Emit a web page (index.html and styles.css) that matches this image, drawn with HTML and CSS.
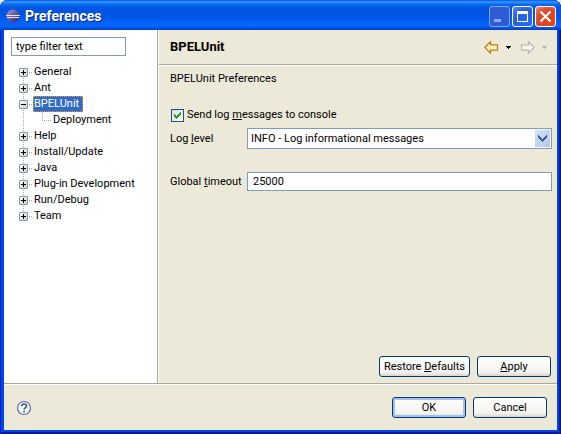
FILE: index.html
```
<!DOCTYPE html>
<html lang="en">
<head>
<meta charset="utf-8">
<title>Preferences</title>
<link rel="stylesheet" href="styles.css">
</head>
<body>
<div class="window">
  <header class="titlebar">
    <svg class="app-icon" viewBox="0 0 16 16" aria-hidden="true">
      <defs><linearGradient id="orb" x1="0" y1="0" x2="1" y2="1"><stop offset="0" stop-color="#b79cc4"/><stop offset=".4" stop-color="#6f68ae"/><stop offset="1" stop-color="#2c2165"/></linearGradient></defs>
      <circle cx="8" cy="8" r="6.500" fill="url(#orb)"/>
      <path d="M1 7.500h14M2 9.500h12" stroke="#e4e4f8"/>
    </svg>
    <h1 class="window-title">Preferences</h1>
    <div class="window-buttons">
      <button class="win-button win-button--dim" type="button" aria-label="Minimize"><svg viewBox="0 0 19 19"><path d="M4 12h7v3H4z" fill="#8fa9f0"/></svg></button>
      <button class="win-button" type="button" aria-label="Maximize"><svg viewBox="0 0 19 19"><path d="M4 4h11v11H4z M5 7v7h9V7z" fill="#fff" fill-rule="evenodd"/></svg></button>
      <button class="win-button win-button--close" type="button" aria-label="Close"><svg viewBox="0 0 19 19"><path d="M4.500 4.500l10 10M14.500 4.500l-10 10" stroke="#fff" stroke-width="2.200"/></svg></button>
    </div>
  </header>

  <div class="client">
    <div class="panes">
      <nav class="sidebar" aria-label="Preference pages">
        <input class="filter" type="text" value="type filter text" aria-label="Filter">
        <ul class="tree">
          <li><div class="row row--first"><button class="toggle" type="button" aria-label="Expand General"></button><span class="node">General</span></div></li>
          <li><div class="row"><button class="toggle" type="button" aria-label="Expand Ant"></button><span class="node">Ant</span></div></li>
          <li><div class="row"><button class="toggle toggle--open" type="button" aria-label="Collapse BPELUnit"></button><span class="node node--selected">BPELUnit</span></div>
            <ul class="subtree"><li><div class="row row--child"><span class="node">Deployment</span></div></li></ul></li>
          <li><div class="row"><button class="toggle" type="button" aria-label="Expand Help"></button><span class="node">Help</span></div></li>
          <li><div class="row"><button class="toggle" type="button" aria-label="Expand Install/Update"></button><span class="node">Install/Update</span></div></li>
          <li><div class="row"><button class="toggle" type="button" aria-label="Expand Java"></button><span class="node">Java</span></div></li>
          <li><div class="row"><button class="toggle" type="button" aria-label="Expand Plug-in Development"></button><span class="node">Plug-in Development</span></div></li>
          <li><div class="row"><button class="toggle" type="button" aria-label="Expand Run/Debug"></button><span class="node">Run/Debug</span></div></li>
          <li><div class="row row--last"><button class="toggle" type="button" aria-label="Expand Team"></button><span class="node">Team</span></div></li>
        </ul>
      </nav>

      <main class="page">
        <div class="page-header">
          <h2 class="page-title">BPELUnit</h2>
          <div class="history">
            <button class="nav-button" type="button" aria-label="Back"><svg class="arrow" viewBox="0 0 15 13"><path d="M.8 6.500L6.500.8v3h7v5.400h-7v3z" fill="#fff0b8" stroke="#b97f14" stroke-width="1.200"/></svg></button>
            <button class="nav-button" type="button" aria-label="Back history"><svg class="caret" viewBox="0 0 5 3"><path d="M0 0h5v1H4v1H3v1H2V2H1V1H0z"/></svg></button>
            <button class="nav-button nav-button--next" type="button" aria-label="Forward" disabled><svg class="arrow" viewBox="0 0 15 13"><path d="M14.200 6.500L8.500.8v3h-7v5.400h7v3z" fill="#f6f5f0" stroke="#b9b8b2" stroke-width="1.200"/></svg></button>
            <button class="nav-button" type="button" aria-label="Forward history" disabled><svg class="caret" viewBox="0 0 5 3"><path d="M0 0h5v1H4v1H3v1H2V2H1V1H0z" fill="#bdbbaf"/></svg></button>
          </div>
        </div>
        <form class="page-body">
          <p class="description">BPELUnit Preferences</p>
          <label class="check-row"><input class="checkbox" type="checkbox" checked><span>Send log <u>m</u>essages to console</span></label>
          <div class="fields">
            <label for="level">Log <u>l</u>evel</label>
            <select class="field field--select" id="level"><option>INFO - Log informational messages</option></select>
            <label for="timeout">Global <u>t</u>imeout</label>
            <input class="field" id="timeout" type="text" value="25000">
          </div>
          <div class="page-actions">
            <button class="button button--wide" type="button">Restore <u>D</u>efaults</button>
            <button class="button" type="button"><u>A</u>pply</button>
          </div>
        </form>
      </main>
    </div>

    <footer class="footer">
      <button class="help" type="button" aria-label="Help"><svg viewBox="0 0 16 16"><circle cx="8" cy="8" r="6.500" fill="#f4f7fb" stroke="#5b7499" stroke-width="1.200"/><path d="M5.700 6.300c0-3 4.800-3 4.800-.2C10.500 8 8.100 7.600 8.100 9.600M8.100 10.800v1.700" fill="none" stroke="#3f5d89" stroke-width="1.700"/></svg></button>
      <div class="dialog-actions">
        <button class="button button--default" type="submit">OK</button>
        <button class="button" type="button">Cancel</button>
      </div>
    </footer>
  </div>
</div>
</body>
</html>
```
FILE: styles.css
```
* { box-sizing: border-box; }

body {
  margin: 0;
  background: #ece9d8;
  color: #000;
  font: 11px/16px Tahoma, Roboto, sans-serif;
}

button, input, select { font: inherit; color: inherit; }
button { padding: 0; border: 0; background: none; }
h1, h2, p, ul { margin: 0; padding: 0; }
ul { list-style: none; }
svg { display: block; }

.window {
  display: flex;
  flex-direction: column;
  min-height: 100vh;
  padding: 0 4px 4px;
  border-radius: 8px 8px 0 0;
  background: #0046e0;
  box-shadow: inset 1px 0 #0019cf, inset -1px 0 #00138c, inset -2px 0 #001ea0, inset 0 -1px #00138c, inset 0 -2px #001ea0;
}

.titlebar {
  display: flex;
  align-items: center;
  gap: 4px;
  height: 30px;
  margin: 0 -4px;
  padding: 2px 5px 0;
  border-radius: 8px 8px 0 0;
  background: linear-gradient(#0058e6 0, #3a93ff 2px, #0670f0 4px, #0054e3 8px, #0055e5 16px, #0064fb 23px, #0066ff 26px, #0048d8 29px, #0039c0 30px);
}

.app-icon { width: 16px; height: 16px; }

.window-title {
  flex: 1;
  color: #fff;
  font: bold 14px/20px "Trebuchet MS", Roboto, sans-serif;
  text-shadow: 1px 1px #0a1e8c;
}

.window-buttons { display: flex; gap: 2px; }

.win-button {
  width: 21px;
  height: 21px;
  border: 1px solid #fff;
  border-radius: 3px;
  background: radial-gradient(circle at 75% 80%, #2a6cf0, #2c5ddc 60%, #5e8af4);
}
.win-button--dim { border-color: #8aa5ef; background: #2e5bd8; }
.win-button--close { background: radial-gradient(circle at 70% 75%, #e1441c, #da4a28 60%, #ec8f78); }

.client { display: flex; flex: 1; flex-direction: column; background: #ece9d8; }
.panes { display: flex; flex: 1; border-bottom: 1px solid #aca899; }

.sidebar {
  flex: none;
  width: 154px;
  padding: 7px;
  border-right: 1px solid #aca899;
  background: #fff;
}

.filter {
  display: block;
  width: 115px;
  height: 19px;
  padding: 0 4px;
  border: 1px solid #7f9db9;
  background: #fff;
}

.tree { margin-top: 8px; }

.row {
  display: flex;
  align-items: center;
  gap: 5px;
  height: 16px;
  padding-left: 8px;
  background:
    repeating-linear-gradient(#aca899 0 1px, transparent 1px 2px) 12px 0 / 1px 16px no-repeat,
    repeating-linear-gradient(90deg, #aca899 0 1px, transparent 1px 2px) 18px 8px / 4px 1px no-repeat;
}
.row--first { background-position: 12px 8px, 18px 8px; }
.row--last { background-size: 1px 8px, 4px 1px; }
.row--child {
  padding-left: 41px;
  background:
    repeating-linear-gradient(#aca899 0 1px, transparent 1px 2px) 12px 0 / 1px 16px no-repeat,
    repeating-linear-gradient(#aca899 0 1px, transparent 1px 2px) 31px 0 / 1px 8px no-repeat,
    repeating-linear-gradient(90deg, #aca899 0 1px, transparent 1px 2px) 31px 8px / 9px 1px no-repeat;
}

.toggle {
  width: 9px;
  height: 9px;
  border: 1px solid #7898b5;
  border-radius: 1px;
  background:
    linear-gradient(#000, #000) center / 5px 1px no-repeat,
    linear-gradient(#000, #000) center / 1px 5px no-repeat,
    linear-gradient(135deg, #fff, #d2ccc0);
}
.toggle--open {
  background:
    linear-gradient(#000, #000) center / 5px 1px no-repeat,
    linear-gradient(135deg, #fff, #d2ccc0);
}

.node { padding: 0 1px; white-space: nowrap; }
.node--selected {
  height: 16px;
  padding: 0 3px 0 0;
  border: 1px dotted #e0a040;
  background: #316ac5;
  color: #fff;
  line-height: 14px;
}

.page {
  display: flex;
  flex: 1;
  flex-direction: column;
  min-width: 0;
  border-left: 1px solid #fff;
}

.page-header {
  display: flex;
  align-items: center;
  justify-content: space-between;
  height: 35px;
  padding: 0 10px 0 11px;
  border-bottom: 1px solid #aca899;
}
.page-title { font: bold 13px/16px Tahoma, Roboto, sans-serif; }
.history { display: flex; align-items: center; gap: 7px; }
.nav-button--next { margin-left: 2px; }
.arrow { width: 15px; height: 13px; }
.caret { width: 5px; height: 3px; }

.page-body {
  display: flex;
  flex: 1;
  flex-direction: column;
  padding: 5px 5px 6px 11px;
  border-top: 1px solid #fff;
}

.check-row {
  display: flex;
  align-items: center;
  gap: 3px;
  margin-top: 20px;
}

.checkbox {
  appearance: none;
  width: 13px;
  height: 13px;
  margin: 0 0 0 1px;
  border: 1px solid #1c5180;
  background: linear-gradient(135deg, #dcdcd7, #fff);
}
.checkbox:checked {
  background:
    conic-gradient(#21a121 0 0) 2px 4px / 1px 3px no-repeat,
    conic-gradient(#21a121 0 0) 3px 5px / 1px 3px no-repeat,
    conic-gradient(#21a121 0 0) 4px 6px / 1px 3px no-repeat,
    conic-gradient(#21a121 0 0) 5px 5px / 1px 3px no-repeat,
    conic-gradient(#21a121 0 0) 6px 4px / 1px 3px no-repeat,
    conic-gradient(#21a121 0 0) 7px 3px / 1px 3px no-repeat,
    conic-gradient(#21a121 0 0) 8px 2px / 1px 3px no-repeat,
    linear-gradient(135deg, #dcdcd7, #fff);
}

.fields {
  display: grid;
  grid-template-columns: 72px 1fr;
  align-items: center;
  gap: 23px 5px;
  margin-top: 5px;
  white-space: nowrap;
}

.field {
  width: 100%;
  height: 19px;
  padding: 0 5px;
  border: 1px solid #7f9db9;
  border-radius: 0;
  background: #fff;
}
.field--select {
  appearance: none;
  height: 21px;
  padding: 0 20px 0 3px;
  background:
    conic-gradient(#4d6185 0 0) right 12px top 6px / 1px 3px no-repeat,
    conic-gradient(#4d6185 0 0) right 11px top 7px / 1px 3px no-repeat,
    conic-gradient(#4d6185 0 0) right 10px top 8px / 1px 3px no-repeat,
    conic-gradient(#4d6185 0 0) right 9px top 9px / 1px 3px no-repeat,
    conic-gradient(#4d6185 0 0) right 8px top 10px / 1px 3px no-repeat,
    conic-gradient(#4d6185 0 0) right 7px top 9px / 1px 3px no-repeat,
    conic-gradient(#4d6185 0 0) right 6px top 8px / 1px 3px no-repeat,
    conic-gradient(#4d6185 0 0) right 5px top 7px / 1px 3px no-repeat,
    conic-gradient(#4d6185 0 0) right 4px top 6px / 1px 3px no-repeat,
    linear-gradient(135deg, #d3e1fd, #b2c7f6) right 1px center / 15px 17px no-repeat,
    #fff;
}

.page-actions, .dialog-actions { display: flex; gap: 7px; }
.page-actions { justify-content: flex-end; margin-top: auto; padding-right: 1px; }

.button {
  min-width: 74px;
  height: 21px;
  padding: 0 4px;
  border: 1px solid #003c74;
  border-radius: 3px;
  background: linear-gradient(#fff, #f4f3ee 80%, #d9d5ca);
  line-height: 18px;
}
.button--wide { min-width: 91px; }
.button--default { box-shadow: inset 0 0 0 2px #a5bff0; }

.footer {
  display: flex;
  align-items: center;
  justify-content: space-between;
  height: 46px;
  padding: 0 10px 0 12px;
  border-top: 1px solid #fff;
}
.help svg { width: 16px; height: 16px; }
```
